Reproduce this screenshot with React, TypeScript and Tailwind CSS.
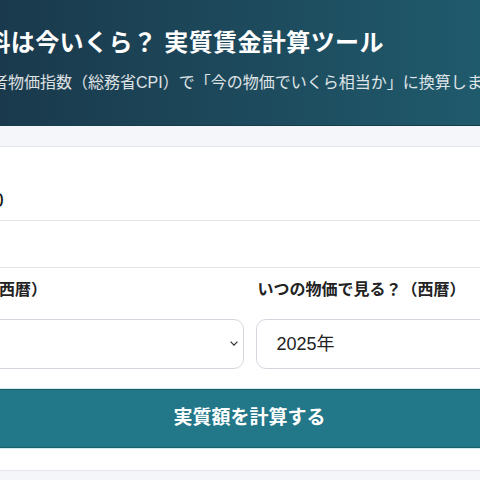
import React from "react";

const years = ["1990年", "1995年", "2000年", "2005年", "2010年", "2015年", "2020年", "2025年"];

const Chevron = () => (
  <svg viewBox="0 0 8 5" className="h-[5px] w-[8px]" fill="none" stroke="#333" strokeWidth="1.2">
    <polyline points="0.6,0.6 4,4.2 7.4,0.6" />
  </svg>
);

function YearSelect({ value, showChevron }: { value: string; showChevron?: boolean }) {
  return (
    <div className="relative">
      <select
        defaultValue={value}
        className="h-[50px] w-full appearance-none rounded-[10px] border border-[#d3d7dd] bg-white px-5 text-[18px] text-[#222] outline-none"
      >
        {years.map((y) => (
          <option key={y}>{y}</option>
        ))}
      </select>
      {showChevron && (
        <span className="pointer-events-none absolute right-[6px] top-[22px]">
          <Chevron />
        </span>
      )}
    </div>
  );
}

export default function App() {
  return (
    <div className="min-h-[480px] w-full overflow-hidden bg-[#f4f6f9] font-['Liberation_Sans','Noto_Sans_CJK_JP',sans-serif]">
      {/* Header */}
      <header className="h-[126px] border-b border-[#173c4b] bg-linear-to-r from-[#1a394c] to-[#1f5a6c] pt-[27px] text-white">
        <h1 className="-ml-[38px] whitespace-nowrap text-[24px] font-bold leading-[32px] tracking-[0.4px]">
          給料は今いくら？ 実質賃金計算ツール
        </h1>
        <p className="-ml-[40px] mt-3 whitespace-nowrap text-[16px] leading-[24px] text-white/85">
          消費者物価指数（総務省CPI）で「今の物価でいくら相当か」に換算します。
        </p>
      </header>

      <main className="pt-5">
        <div className="border-y border-[#e4e7eb] bg-white pb-[22px]">
          {/* Amount */}
          <div className="h-[74px] border-b border-[#e1e4e8] pt-[39px]">
            <span className="-ml-[63px] block whitespace-nowrap text-[20px] leading-[28px] text-[#111]">
              200000
            </span>
          </div>
          <div className="h-[47px] border-b border-[#e1e4e8]" />

          {/* Years + submit */}
          <div className="-ml-[113px] w-[725px] pt-[10px]">
            <div className="grid grid-cols-2 gap-3">
              <div>
                <label className="block whitespace-nowrap text-[16px] font-semibold leading-[24px] text-[#222]">
                  いつの給料？（西暦）
                </label>
                <div className="mt-[17px]">
                  <YearSelect value="1990年" showChevron />
                </div>
              </div>
              <div>
                <label className="block whitespace-nowrap pl-[2px] text-[16px] font-semibold leading-[24px] text-[#222]">
                  いつの物価で見る？（西暦）
                </label>
                <div className="mt-[17px]">
                  <YearSelect value="2025年" showChevron />
                </div>
              </div>
            </div>
            <button
              type="button"
              className="mt-5 h-[59px] w-full rounded-[10px] border border-[#1b5f6d] bg-[#227788] text-[19px] font-bold text-white shadow-[0_0_0_1px_#cfe9ef]"
            >
              実質額を計算する
            </button>
          </div>
        </div>
      </main>
    </div>
  );
}
